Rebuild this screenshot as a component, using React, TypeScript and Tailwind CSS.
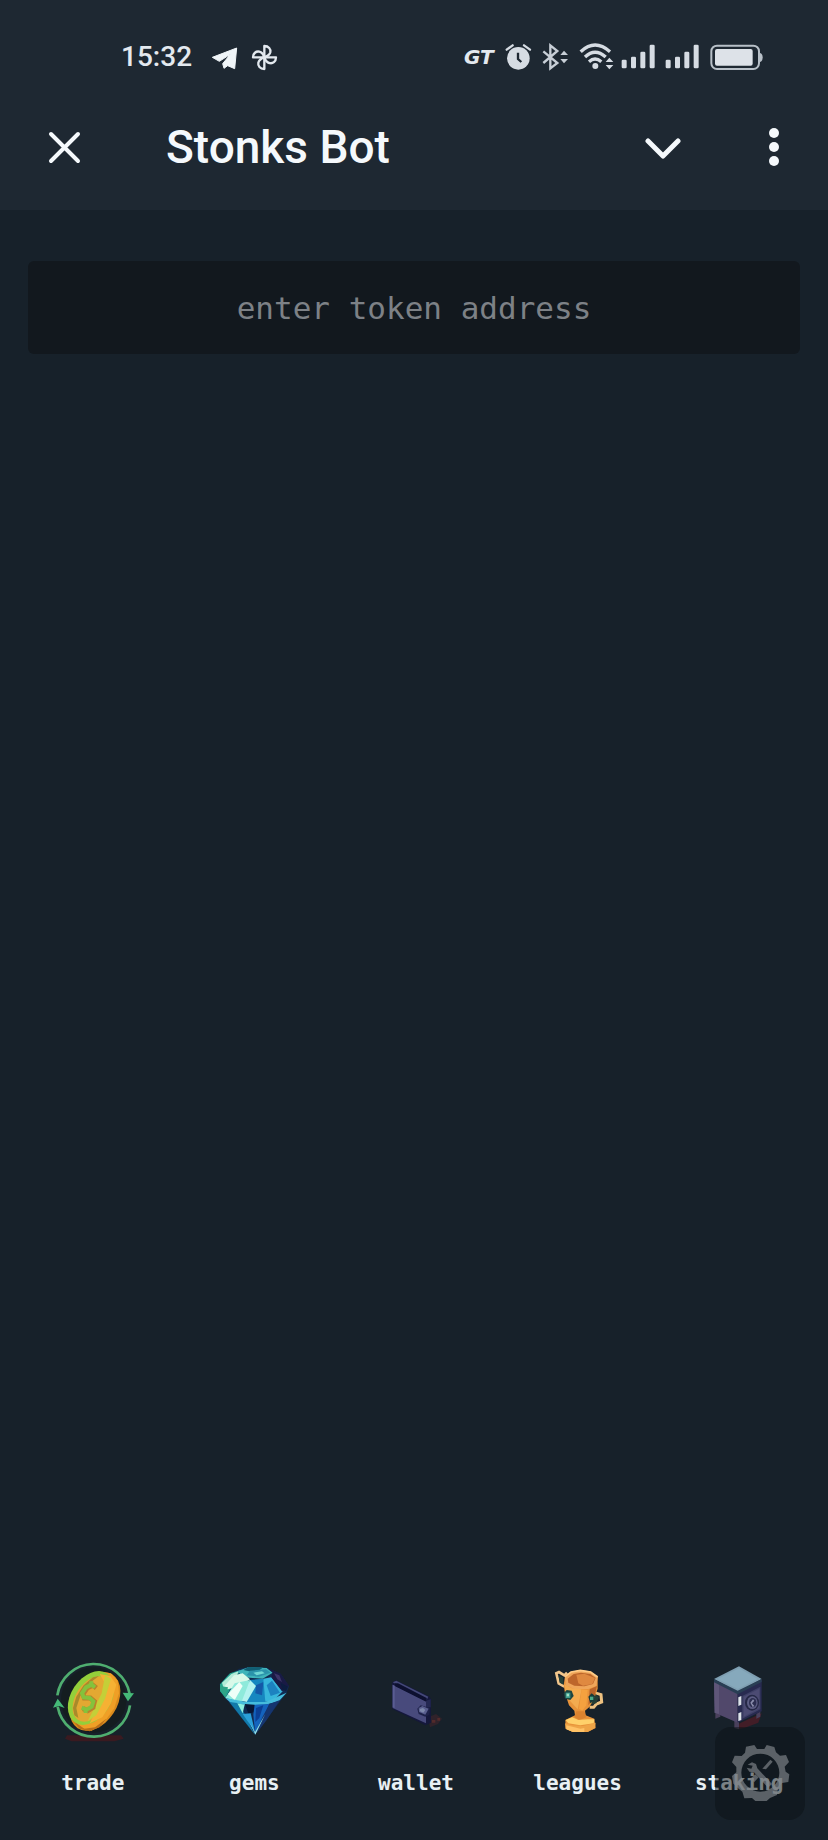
import React, { useState } from 'react';

const TradeIcon: React.FC = () => (
  <svg viewBox="51 45 270 270" className="size-[90px]" aria-hidden="true">
    <path d="M108 286H270L278 296L250 304H122L102 296Z" fill="#3a1a20" />
    <circle cx="188" cy="180" r="98" fill="#141d20" />
    <ellipse cx="192" cy="184" rx="66" ry="96" transform="rotate(33 192 184)" fill="#d98a1c" />
    <path d="M206 95L240 100L260 122L264 160L250 205L220 246L182 272L146 262L130 230Z" fill="#ef9f26" />
    <path d="M128 244L160 266L192 262L226 236L206 262L176 274L146 266Z" fill="#b96f1a" />
    <ellipse cx="180" cy="174" rx="60" ry="88" transform="rotate(33 180 174)" fill="#94cf3a" />
    <ellipse cx="182" cy="177" rx="48" ry="75" transform="rotate(33 182 177)" fill="#e3a832" />
    <path d="M206 102L238 108L256 134L240 190L214 232L176 250L196 212L216 176L224 134Z" fill="#f6b133" />
    <path d="M222 106L240 116L222 176L196 226L170 244L190 204L212 160Z" fill="#c4cf38" />
    <path d="M126 204L136 170L158 136L186 112L204 108L172 132L148 168L136 204L142 234L130 226Z" fill="#a98a2a" />
    <path d="M196 144L186 136L168 144L156 162L160 174L178 174L190 184L186 202L170 212L156 206" fill="none" stroke="#b9822a" strokeWidth="15" />
    <path d="M192 142L182 134L165 142L153 160L158 172L176 174L187 184L182 200L166 209L152 203M181 124V137M164 207V219" fill="none" stroke="#84c23c" strokeWidth="12" />
    <g fill="none" stroke="#4fae70" strokeWidth="8">
      <path d="M79 166A110 110 0 0 1 296 162" />
      <path d="M297 196A110 110 0 0 1 80 200" />
    </g>
    <path d="M275 158L309 160L291 184Z" fill="#45b978" />
    <path d="M66 203L80 176L101 204L84 198Z" fill="#45b978" />
  </svg>
);

const GemsIcon: React.FC = () => (
  <svg viewBox="27 45 270 270" className="size-[90px]" aria-hidden="true">
    <path d="M60 133L84 104L118 86L150 81L200 83L242 101L267 138L260 158L165 284L76 174L60 153Z" fill="#102b52" />
    <path d="M60 133L90 100L122 90L102 126L76 174L60 153Z" fill="#23a58e" />
    <path d="M66 128L94 102L118 92L98 126L70 142Z" fill="#b2ecd8" />
    <path d="M112 94L145 82L200 84L218 98L188 116L130 112Z" fill="#3fb4ba" />
    <path d="M145 81L190 82L168 98L130 90Z" fill="#115f74" />
    <path d="M150 92L198 88L212 98L176 110L140 106Z" fill="#2b93ab" />
    <path d="M160 98L186 94L194 100L170 106Z" fill="#6fd6d4" />
    <path d="M102 106L128 100L150 118L120 138L84 148L66 146Z" fill="#d9f9e9" />
    <path d="M76 174L104 130L150 120L140 184L112 184Z" fill="#8eeadb" />
    <path d="M84 162L118 126L128 138L104 180Z" fill="#effff8" />
    <path d="M60 138L84 142L76 170L62 154Z" fill="#2fa588" />
    <path d="M150 120L190 116L210 150L196 186L140 186Z" fill="#1687c0" />
    <path d="M150 120L168 138L140 186L126 182Z" fill="#b4f3ef" />
    <path d="M168 136L190 126L186 166L166 160Z" fill="#1458a7" />
    <path d="M190 116L214 112L248 154L222 180L196 186Z" fill="#37b6dc" />
    <path d="M200 136L216 122L240 158L212 168Z" fill="#1c82c0" />
    <path d="M200 83L242 101L267 138L246 154L214 112L218 96Z" fill="#191a45" />
    <path d="M222 100L238 106L246 126L232 118Z" fill="#3c3468" />
    <path d="M242 128L264 140L258 154L246 148Z" fill="#0c1d40" />
    <path d="M76 174L140 186L196 186L260 158L236 184L196 194L138 196L92 188Z" fill="#45bcdc" />
    <path d="M88 186L118 190L140 234L165 284Z" fill="#1279a8" />
    <path d="M112 190L134 194L128 220Z" fill="#8df0e0" />
    <path d="M134 192L164 194L162 216L146 222Z" fill="#081735" />
    <path d="M128 222L152 220L165 276Z" fill="#2a9fd8" />
    <path d="M164 194L208 192L190 234L165 276L160 224Z" fill="#1463bd" />
    <path d="M168 204L190 196L178 234L166 246Z" fill="#0b3f95" />
    <path d="M208 192L240 180L200 240L170 280L186 234Z" fill="#15356f" />
    <path d="M150 250L165 276L196 222L166 284Z" fill="#8fe2ee" />
  </svg>
);

const WalletIcon: React.FC = () => (
  <svg viewBox="27 45 270 270" className="size-[90px]" aria-hidden="true">
    <path d="M198 232L222 222L240 236L228 252L204 262Z" fill="#30222a" />
    <path d="M210 240H220V248H210ZM226 234H234V242H226Z" fill="#532a2b" />
    <path d="M90 128L102 121L201 169L207 178V248L190 256L91 207Z" fill="#15183b" />
    <path d="M92 134L192 184V250L92 204Z" fill="#484a7c" />
    <path d="M92 127L103 122L199 170L194 180Z" fill="#444878" />
    <path d="M99 130L108 130L194 174L194 186L100 139Z" fill="#0d1030" />
    <path d="M92 134L98 138V204L92 202Z" fill="#5a5c92" />
    <path d="M192 182L206 178V202L192 204Z" fill="#242852" />
    <path d="M166 206L176 196L204 204L202 224L190 230L170 222Z" fill="#1d2149" />
    <path d="M170 204L181 198L200 206L190 224L171 216Z" fill="#595e8e" />
    <path d="M173 207L183 204L190 210L184 218L174 214Z" fill="#7d88ac" />
  </svg>
);

const LeaguesIcon: React.FC = () => (
  <svg viewBox="48 45 270 270" className="size-[90px]" aria-hidden="true">
    <path d="M142 140L125 130L118 100L126 96L142 106L150 98" fill="none" stroke="#f2c68c" strokeWidth="8" />
    <path d="M125 108L138 112L140 134L128 128Z" fill="#244039" />
    <path d="M232 158L252 164L254 186L238 192L230 202L218 202" fill="none" stroke="#edc180" strokeWidth="9" />
    <path d="M216 164L232 158L246 172L238 190L220 194Z" fill="#263d34" />
    <path d="M144 108L160 96L188 90L220 94L242 110V146L232 174L218 200L204 212L206 226L232 236L236 264L212 276H168L146 266L145 240L174 226L172 212L156 196L144 160L140 136Z" fill="#e8933a" />
    <path d="M144 112L164 96L190 90L222 96L242 112L238 138L214 147L172 147L146 136Z" fill="#efa65a" />
    <path d="M152 116L170 102L192 98L220 102L236 114L228 132L202 139L172 137L154 128Z" fill="#bd662b" />
    <path d="M178 104L202 101L234 114L226 132L198 137L184 130Z" fill="#df8940" />
    <path d="M142 132L164 145L194 148L182 208L160 184L146 160Z" fill="#f3ab50" />
    <path d="M194 148L212 150L208 196L196 212L186 206Z" fill="#f5a13f" />
    <path d="M218 148L240 138L232 172L214 196Z" fill="#ba642a" />
    <path d="M178 214H202L208 232L188 240L172 232Z" fill="#dc832f" />
    <path d="M146 240L166 232L184 240L212 238L232 238L230 250L190 256L154 250Z" fill="#ffd06a" />
    <path d="M144 250L164 256L198 258L236 248L234 264L212 276H168L146 266Z" fill="#eea447" />
    <path d="M148 256L190 266L202 264L202 276H168L148 268Z" fill="#ffc266" />
    <path d="M140 160L149 150L164 152L170 168L160 180L144 176Z" fill="#1c4440" />
    <path d="M146 158H160V174H146Z" fill="#3e9e8f" />
    <path d="M149 161H156V169H149Z" fill="#a2ddc4" />
    <path d="M214 170L224 160L234 168L232 182L220 190Z" fill="#193b37" />
    <path d="M219 170H229V180H219Z" fill="#4dab8a" />
    <path d="M144 110L162 96L190 91L221 96L242 111" fill="none" stroke="#ffcc87" strokeWidth="5" />
  </svg>
);

const StakingIcon: React.FC = () => (
  <svg viewBox="39 45 270 270" className="size-[90px]" aria-hidden="true">
    <path d="M176 250L242 220L232 248L190 264L168 268Z" fill="#421d27" />
    <path d="M103 216V236L118 230V222ZM160 242V264L174 268V246ZM226 222V236L238 230V214Z" fill="#4a405c" />
    <path d="M99 120L170 155V248L101 218Z" fill="#51486b" />
    <path d="M99 120L114 128V222L101 218Z" fill="#5f5679" />
    <path d="M170 155L242 119V214L170 248Z" fill="#282a50" />
    <path d="M99 117L174 79L242 117L170 156Z" fill="#7f9fb2" />
    <path d="M110 117L174 85L230 117L170 147Z" fill="#86a9bc" />
    <path d="M99 117L170 152L242 117V126L170 163L99 127Z" fill="#293e54" />
    <path d="M184 168L238 140V208L184 236Z" fill="#3f4167" />
    <path d="M188 170L235 146V205L188 230Z" fill="#4c4b73" />
    <path d="M172 172L181 168V194L172 198ZM172 220L181 216V240L172 243Z" fill="#dde3e8" />
    <ellipse cx="213" cy="188" rx="21" ry="24" fill="#252846" />
    <ellipse cx="214" cy="188" rx="16" ry="19" fill="#5c5d83" />
    <ellipse cx="215" cy="188" rx="11" ry="14" fill="#2c2e50" />
    <path d="M208 188L216 178L220 182L213 190L220 198L215 201Z" fill="#8a8dab" />
  </svg>
);

const SignalIcon: React.FC = () => (
  <svg viewBox="513 33 114 90" className="h-[30px] w-[38px]" fill="#d6dce3" aria-hidden="true">
    <rect x="515" y="86" width="15" height="26" rx="4" />
    <rect x="543" y="77" width="15" height="35" rx="4" />
    <rect x="571" y="62" width="15" height="50" rx="4" />
    <rect x="599" y="41" width="15" height="71" rx="4" />
  </svg>
);

const StatusBar: React.FC = () => (
  <div className="flex h-[84px] items-center justify-between pt-[30px] pr-[65px] pl-[121px]">
    <div className="flex items-center gap-3">
      <time className="mr-2 w-[70px] text-[28px] leading-8 font-medium text-[#e3e9ef]">15:32</time>
      <svg viewBox="333 33 81 90" className="h-[30px] w-[27px]" aria-hidden="true">
        <path d="M337 79L410 51L404 113L383 104L372 112L368 98L391 70L358 91Z" fill="#f0f5f8" stroke="#f0f5f8" strokeWidth="3" strokeLinejoin="round" />
      </svg>
      <svg viewBox="450 33 87 90" className="h-[30px] w-[29px]" fill="none" stroke="#e3e9ef" strokeWidth="7" strokeLinejoin="round" aria-hidden="true">
        <path d="M493 79V45C506 45 513 54 511 64C509 72 502 76 493 79Z" />
        <path d="M493 79H528C528 92 518 99 508 96C500 94 496 88 493 79Z" />
        <path d="M493 79V114C480 114 473 105 475 95C477 87 484 82 493 79Z" />
        <path d="M493 79H459C459 67 468 60 478 62C486 64 490 70 493 79Z" />
      </svg>
    </div>
    <div className="flex items-center gap-[6px]">
      <span className="w-[34px] font-['DejaVu_Sans',sans-serif] text-[20px] leading-none font-bold text-[#e3e9ef] italic">GT</span>
      <svg viewBox="162 33 87 90" className="h-[30px] w-[29px]" aria-hidden="true">
        <circle cx="205" cy="82" r="34" fill="#d6dce3" />
        <path d="M204 65V84L214 93" fill="none" stroke="#1e2832" strokeWidth="7" />
        <path d="M170 56L188 43M222 43L240 56" stroke="#d6dce3" strokeWidth="7" strokeLinecap="round" />
      </svg>
      <svg viewBox="267 33 93 90" className="h-[30px] w-[31px]" aria-hidden="true">
        <path d="M280 61L322 96L301 112V43L322 60L280 96" fill="none" stroke="#c8cfd7" strokeWidth="7" />
        <path d="M331 72L342 59L354 72ZM331 84L342 97L354 84Z" fill="#c8cfd7" />
      </svg>
      <svg viewBox="378 33 117 90" className="h-[30px] w-[39px]" aria-hidden="true">
        <g fill="none" stroke="#d6dce3" strokeWidth="10">
          <path d="M392 62Q435 22 480 62" />
          <path d="M405 78Q435 49 467 78" />
          <path d="M417 92Q435 76 454 92" />
        </g>
        <circle cx="436" cy="105" r="9" fill="#d6dce3" />
        <path d="M467 93L478 80L490 93ZM467 102L478 115L490 102Z" fill="#d6dce3" />
      </svg>
      <SignalIcon />
      <SignalIcon />
      <svg viewBox="777 33 162 90" className="h-[30px] w-[54px]" aria-hidden="true">
        <rect x="784" y="44" width="143" height="70" rx="17" fill="none" stroke="#b8c0c8" strokeWidth="6" />
        <rect x="795" y="54" width="113" height="50" rx="6" fill="#dde2e8" />
        <path d="M930 66Q938 68 938 79Q938 91 930 93Z" fill="#b8c0c8" />
      </svg>
    </div>
  </div>
);

const SettingsIcon: React.FC = () => (
  <svg viewBox="105 260 270 279" className="h-[93px] w-[90px]" aria-hidden="true">
    <g fill="#83888d" opacity="0.65">
      <path
        fillRule="evenodd"
        d="M223 314L231 326H253L260 314L283 320L288 336L300 346L318 344L327 365L314 379L317 394L328 402L325 425L306 428L294 443L291 464L270 473L260 482H226L216 473L193 474L187 454L176 445L160 430L156 407L169 396L169 380L156 366L164 346L185 347L195 337L198 319ZM241 340A57 57 0 1 0 241 454A57 57 0 1 0 241 340Z"
      />
      <path d="M203 373L216 366L228 371L232 384L276 431L264 442L222 396L208 394L200 382L214 385L218 376Z" />
      <path d="M271 358L278 364L258 387L247 385Z" />
      <path d="M214 412L226 402L236 411L222 426Z" />
    </g>
  </svg>
);

const navItems = [
  { label: 'trade', Icon: TradeIcon },
  { label: 'gems', Icon: GemsIcon },
  { label: 'wallet', Icon: WalletIcon },
  { label: 'leagues', Icon: LeaguesIcon },
  { label: 'staking', Icon: StakingIcon },
];

const App: React.FC = () => {
  const [address, setAddress] = useState<string>('');

  return (
    <div className="relative flex min-h-screen flex-col bg-[#17212a] font-[Roboto,sans-serif]">
      <header className="bg-[#1e2832]">
        <StatusBar />
        <div className="flex h-[126px] items-center px-12 text-[#f5f9fc]">
          <button type="button" aria-label="Close">
            <svg viewBox="0 0 33 33" className="size-[33px]" fill="none" stroke="currentColor" strokeWidth="4" strokeLinecap="round" aria-hidden="true">
              <path d="M3 3L30 30M30 3L3 30" />
            </svg>
          </button>
          <h1 className="ml-[85px] flex-1 text-[46px] leading-[54px] font-medium">Stonks Bot</h1>
          <button type="button" aria-label="Minimize" className="mr-[87px]">
            <svg viewBox="0 0 36 36" className="size-9" fill="none" stroke="currentColor" strokeWidth="5" strokeLinecap="round" strokeLinejoin="round" aria-hidden="true">
              <path d="M3 12L18 27L33 12" />
            </svg>
          </button>
          <button type="button" aria-label="More options">
            <svg viewBox="0 0 12 40" className="h-10 w-3" fill="currentColor" aria-hidden="true">
              <circle cx="6" cy="6" r="5" />
              <circle cx="6" cy="20" r="5" />
              <circle cx="6" cy="34" r="5" />
            </svg>
          </button>
        </div>
      </header>

      <main className="flex-1 px-7 pt-[51px]">
        <input
          type="text"
          aria-label="Token address"
          value={address}
          onChange={(e) => setAddress(e.target.value)}
          placeholder="enter token address"
          className="h-[93px] w-full rounded-md bg-[#12181e] px-4 text-center font-['DejaVu_Sans_Mono',monospace] text-[31px] text-[#e3e9ef] outline-none placeholder:text-[#7d8186]"
        />
      </main>

      <nav className="grid grid-cols-5 pr-2 pb-[43px] pl-3">
        {navItems.map(({ label, Icon }) => (
          <a key={label} href={`#${label}`} className="flex flex-col items-center gap-6">
            <Icon />
            <span className="font-['DejaVu_Sans_Mono',monospace] text-[21px] leading-7 font-bold text-[#e8f0f4]">{label}</span>
          </a>
        ))}
      </nav>

      <button type="button" aria-label="Tools" className="absolute right-[23px] bottom-5 rounded-2xl bg-[#0c1115]/50">
        <SettingsIcon />
      </button>
    </div>
  );
};

export default App;
